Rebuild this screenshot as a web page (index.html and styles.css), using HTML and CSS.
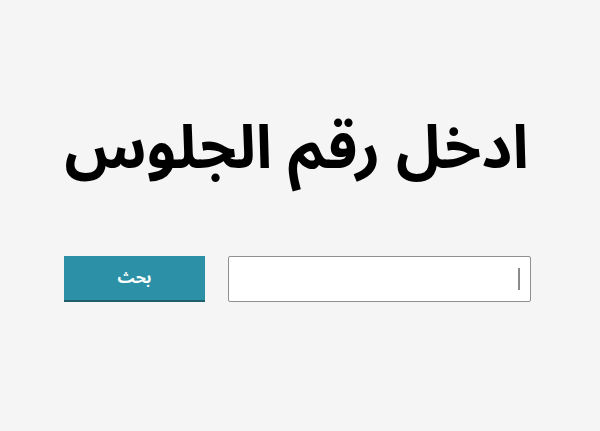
FILE: index.html
```html
<!DOCTYPE html>
<html lang="ar" dir="rtl">
<head>
    <meta charset="UTF-8">
    <title>نتيجة الامتحان</title>
    <link rel="stylesheet" href="styles.css">
</head>
<body>
    <div class="container">
        <h1 class="title">ادخل رقم الجلوس</h1>
        <form class="search-form" onsubmit="return false;">
            <div class="input-wrap">
                <input type="text" id="seatNumber" class="seat-input">
                <span class="caret"></span>
            </div>
            <button type="submit" class="search-button">بحث</button>
        </form>
    </div>
</body>
</html>
```

FILE: styles.css
```css
body {
    font-family: 'Noto Sans Arabic', 'DejaVu Sans', sans-serif;
    background: #f5f5f5;
    color: #000;
    margin: 0;
    padding: 0 5px 0 0;
    min-height: 100vh;
}
.container {
    width: 467px;
    margin: 0 auto;
    padding-top: 99px;
}
.title {
    text-align: center;
    font-size: 60px;
    font-weight: bold;
    white-space: nowrap;
    margin: 0 0 57px;
    line-height: 100px;
    padding-right: 2px;
}
.search-form {
    display: flex;
    gap: 23px;
    height: 46px;
}
.input-wrap {
    position: relative;
    width: 304px;
}
.seat-input {
    width: 100%;
    height: 100%;
    box-sizing: border-box;
    border: 1px solid #8f8f8f;
    border-radius: 2px;
    background: #fff;
    padding: 0 10px;
    font-size: 18px;
    outline: none;
}
.caret {
    position: absolute;
    top: 12px;
    right: 11px;
    width: 2px;
    height: 22px;
    background: #8a8a8a;
}
.search-button {
    width: 141px;
    background-color: #2c91a6;
    color: #fff;
    border: none;
    border-bottom: 2px solid #1d5f6d;
    font-family: 'Noto Sans Arabic', 'DejaVu Sans', sans-serif;
    font-size: 16px;
    font-weight: bold;
    padding: 0;
    cursor: pointer;
}
```
